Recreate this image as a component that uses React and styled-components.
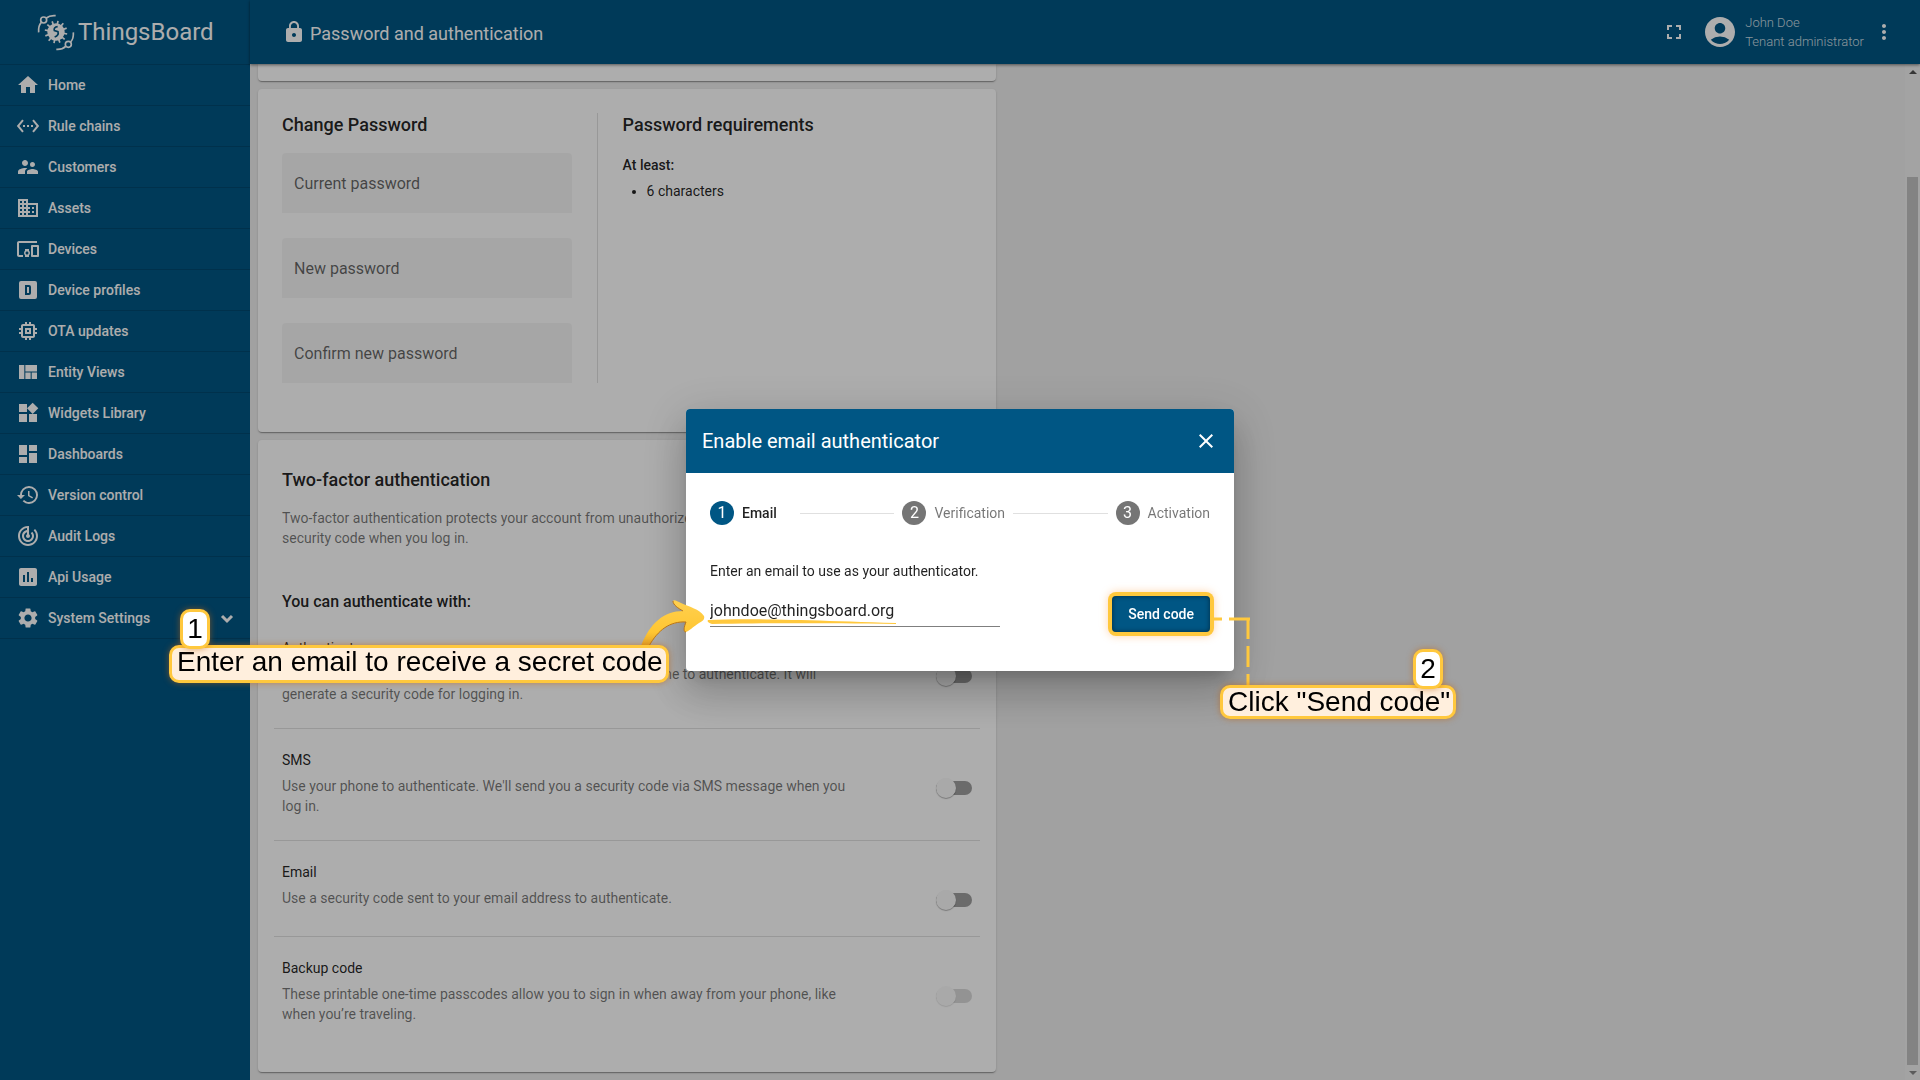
import React from "react";
import styled, { createGlobalStyle, ThemeProvider } from "styled-components";
import {
  MdHome,
  MdSettingsEthernet,
  MdSupervisorAccount,
  MdDomain,
  MdDevicesOther,
  MdMemory,
  MdViewQuilt,
  MdWidgets,
  MdDashboard,
  MdHistory,
  MdTrackChanges,
  MdInsertChart,
  MdSettings,
  MdLock,
  MdFullscreen,
  MdAccountCircle,
  MdMoreVert,
  MdClose
} from "react-icons/md";

const theme = {
  primaryColor: "#005684",
  pageColor: "#eeeeee",
  accentColor: "#ffc83d",
  noteColor: "#ffefdd",
  textColor: "rgba(0, 0, 0, 0.87)",
  mutedColor: "rgba(0, 0, 0, 0.54)",
  lineColor: "rgba(0, 0, 0, 0.12)"
};

const GlobalStyle = createGlobalStyle`
  * {
    box-sizing: border-box;
  }
  body {
    margin: 0;
    font-family: Roboto, "Liberation Sans", sans-serif;
    font-size: 14px;
    line-height: 20px;
    color: ${theme.textColor};
  }
  h1, h2, h3, h4, p, ul {
    margin: 0;
    padding: 0;
  }
  button, input {
    font-family: inherit;
  }
`;

const Page = styled.div`
  display: flex;
  height: 100vh;
  overflow: hidden;
  background: ${props => props.theme.pageColor};
`;

/* side bar */

const SideBar = styled.nav`
  flex: 0 0 250px;
  display: flex;
  flex-direction: column;
  background: ${props => props.theme.primaryColor};
`;

const Brand = styled.a`
  display: flex;
  align-items: center;
  gap: 2px;
  height: 64px;
  padding-left: 36px;
  font-size: 24px;
  line-height: 32px;
  color: #fff;
  text-decoration: none;
`;

const BrandMark = styled.svg`
  width: 40px;
  height: 40px;
`;

const Menu = styled.ul`
  list-style: none;
  border-top: 1px solid rgba(0, 0, 0, 0.15);
`;

const MenuItem = styled.li`border-bottom: 1px solid rgba(0, 0, 0, 0.15);`;

const MenuLink = styled.a`
  display: flex;
  align-items: center;
  gap: 8px;
  height: 40px;
  padding: 0 11px 0 16px;
  font-weight: 500;
  color: #fff;
  text-decoration: none;
  svg {
    flex: none;
    width: 24px;
    height: 24px;
  }
`;

const MenuText = styled.span`flex: 1;`;

/* top bar */

const Column = styled.div`
  flex: 1;
  min-width: 0;
  display: flex;
  flex-direction: column;
`;

const TopBar = styled.header`
  position: relative;
  flex: none;
  display: flex;
  align-items: center;
  height: 64px;
  padding: 0 24px 0 32px;
  color: #fff;
  background: ${props => props.theme.primaryColor};
  box-shadow: 0 1px 3px rgba(0, 0, 0, 0.5);
`;

const PageTitle = styled.h1`
  flex: 1;
  display: flex;
  align-items: center;
  gap: 4px;
  font-size: 18px;
  line-height: 24px;
  font-weight: 400;
  svg {
    width: 24px;
    height: 24px;
  }
  span {
    padding-top: 3px;
  }
`;

const IconButton = styled.button`
  display: flex;
  padding: 0;
  border: 0;
  color: inherit;
  background: none;
  svg {
    width: 24px;
    height: 24px;
  }
`;

const User = styled.div`
  display: flex;
  align-items: center;
  gap: 7px;
  margin: 0 8px 0 16px;
  > svg {
    width: 36px;
    height: 36px;
  }
`;

const UserText = styled.div`
  font-size: 13px;
  line-height: 19px;
  font-weight: 300;
  color: rgba(255, 255, 255, 0.8);
`;

/* content */

const Body = styled.div`
  flex: 1;
  min-height: 0;
  display: flex;
`;

const Content = styled.main`
  flex: 1;
  display: flex;
  flex-direction: column;
  gap: 8px;
  padding: 0 8px;
`;

const Card = styled.section`
  flex: none;
  width: 45%;
  border-radius: 4px;
  background: #fff;
  box-shadow: 0 2px 1px -1px rgba(0, 0, 0, 0.2), 0 1px 1px rgba(0, 0, 0, 0.14),
    0 1px 3px rgba(0, 0, 0, 0.12);
`;

const CardEnd = styled(Card)`
  height: 17px;
  border-radius: 0 0 4px 4px;
`;

const PasswordCard = styled(Card)`
  display: grid;
  grid-template-columns: 42% 1fr;
  column-gap: 25px;
  padding: 24px 24px 49px;
`;

const CardTitle = styled.h2`
  font-size: 18px;
  line-height: 24px;
  font-weight: 500;
`;

const Fields = styled.form`
  display: flex;
  flex-direction: column;
  gap: 25px;
  margin-top: 16px;
`;

const Field = styled.input`
  width: 100%;
  height: 60px;
  padding: 0 12px;
  border: 0;
  border-radius: 4px 4px 0 0;
  font-size: 16px;
  background: rgba(0, 0, 0, 0.04);
  &::placeholder {
    color: rgba(0, 0, 0, 0.6);
    opacity: 1;
  }
`;

const Requirements = styled.div`
  padding-left: 25px;
  border-left: 1px solid ${props => props.theme.lineColor};
`;

const RequirementsLead = styled.h3`
  margin-top: 18px;
  font-size: 14px;
  line-height: 20px;
  font-weight: 500;
`;

const RequirementsList = styled.ul`
  margin-top: 6px;
  padding-left: 24px;
`;

const FactorCard = styled(Card)`padding: 28px 16px 24px;`;

const Intro = styled.div`padding: 0 8px;`;

const Muted = styled.p`color: ${props => props.theme.mutedColor};`;

const IntroText = styled(Muted)`margin-top: 16px;`;

const Subtitle = styled.h3`
  margin: 44px 0 5px;
  font-size: 16px;
  line-height: 20px;
  font-weight: 500;
`;

const Provider = styled.div`
  display: flex;
  justify-content: space-between;
  min-height: 95px;
  padding: 21px 8px 24px;
  & + & {
    border-top: 1px solid ${props => props.theme.lineColor};
    min-height: 96px;
  }
`;

const ProviderText = styled.label`
  flex: 0 1 570px;
`;

const ProviderName = styled.h4`
  margin-bottom: 6px;
  font-size: 14px;
  line-height: 20px;
  font-weight: 400;
`;

const Switch = styled.input`
  appearance: none;
  flex: none;
  display: flex;
  align-items: center;
  width: 36px;
  height: 14px;
  margin: 31px 0 0;
  border-radius: 7px;
  background: ${props => (props.disabled ? "rgba(0, 0, 0, 0.15)" : "rgba(0, 0, 0, 0.38)")};
  &::before {
    content: "";
    width: 20px;
    height: 20px;
    border-radius: 50%;
    background: #fafafa;
    box-shadow: 0 1px 1px rgba(0, 0, 0, ${props => (props.disabled ? 0.12 : 0.3)});
  }
`;

/* scroll bar */

const ScrollBar = styled.div`
  flex: 0 0 15px;
  display: flex;
  flex-direction: column;
  align-items: center;
  padding: 6px 0 5px;
  background: #f1f1f1;
`;

const ScrollArrow = styled.span`
  border: solid transparent;
  border-width: ${props => (props.$down ? "4px 4px 0" : "0 4px 4px")};
  border-color: ${props => (props.$down ? "#888 transparent" : "transparent transparent #505050")};
`;

const ScrollThumb = styled.span`
  flex: 1;
  width: 11px;
  margin: 103px 0 6px;
  background: #c1c1c1;
`;

/* dialog */

const Overlay = styled.div`
  position: fixed;
  inset: 0;
  display: flex;
  align-items: center;
  justify-content: center;
  background: rgba(0, 0, 0, 0.32);
`;

const Dialog = styled.div`
  position: relative;
  width: 548px;
  border-radius: 4px;
  background: #fff;
  box-shadow: 0 11px 15px -7px rgba(0, 0, 0, 0.2), 0 24px 38px 3px rgba(0, 0, 0, 0.14),
    0 9px 46px 8px rgba(0, 0, 0, 0.12);
`;

const DialogHeader = styled.header`
  display: flex;
  align-items: center;
  justify-content: space-between;
  height: 64px;
  padding: 0 16px;
  border-radius: 4px 4px 0 0;
  color: #fff;
  background: ${props => props.theme.primaryColor};
`;

const DialogTitle = styled.h2`
  font-size: 20px;
  line-height: 32px;
  font-weight: 400;
`;

const DialogBody = styled.div`padding: 28px 24px 39px;`;

const Steps = styled.div`
  display: flex;
  align-items: center;
  gap: 8px;
`;

const StepLine = styled.span`
  flex: 1;
  height: 1px;
  background: ${props => props.theme.lineColor};
`;

const StepNumber = styled.span`
  flex: none;
  width: 24px;
  height: 24px;
  border-radius: 50%;
  font-size: 16px;
  line-height: 24px;
  text-align: center;
  color: #fff;
  background: ${props => (props.$active ? props.theme.primaryColor : "#757575")};
`;

const StepLabel = styled.span`
  min-width: 50px;
  font-weight: ${props => (props.$active ? 500 : 400)};
  color: ${props => (props.$active ? props.theme.textColor : props.theme.mutedColor)};
`;

const EmailLabel = styled.label`
  display: block;
  margin-top: 36px;
`;

const EmailRow = styled.form`
  display: flex;
  align-items: flex-start;
  justify-content: space-between;
  margin-top: 15px;
`;

const EmailInput = styled.input`
  width: 290px;
  height: 31px;
  padding: 0 0 2px;
  border: 0;
  border-bottom: 1px solid rgba(0, 0, 0, 0.5);
  font-size: 16px;
  color: ${props => props.theme.textColor};
  outline: none;
`;

const SendButton = styled.button`
  height: 36px;
  padding: 0 16px;
  border: 0;
  border-radius: 4px;
  font-size: 14px;
  font-weight: 500;
  color: #fff;
  background: ${props => props.theme.primaryColor};
  box-shadow: 0 0 0 4px ${props => props.theme.accentColor}, 0 0 8px 4px rgba(255, 150, 50, 0.4),
    inset 0 0 5px rgba(0, 0, 0, 0.5);
`;

/* notes lying over the dialog */

const Drawing = styled.svg`
  position: absolute;
  top: 0;
  left: 0;
  overflow: visible;
  pointer-events: none;
`;

const Note = styled.div`
  position: absolute;
  top: ${props => props.$top}px;
  left: ${props => props.$left}px;
  padding: 0 3px ${props => (props.$tall ? 4 : 0)}px 5px;
  border: 3px solid ${props => props.theme.accentColor};
  border-radius: 10px;
  font-family: "Liberation Sans", Arial, sans-serif;
  font-size: 28px;
  line-height: 28px;
  white-space: nowrap;
  color: #000;
  background: ${props => props.theme.noteColor};
  box-shadow: 0 0 6px rgba(190, 100, 20, 0.6);
`;

const Badge = styled(Note)`
  width: 30px;
  padding: 3px 0;
  text-align: center;
  background: #fff;
`;

const DeviceProfileIcon = () =>
  <svg viewBox="0 0 24 24" fill="currentColor">
    <path d="M9 7h4a2 2 0 0 1 2 2v6a2 2 0 0 1-2 2H9V7m2 2v6h2V9h-2M5 3h14a2 2 0 0 1 2 2v14a2 2 0 0 1-2 2H5a2 2 0 0 1-2-2V5a2 2 0 0 1 2-2z" fillRule="evenodd" />
  </svg>;

const Chevron = () =>
  <svg viewBox="0 0 24 24" fill="none" stroke="currentColor" strokeWidth="3">
    <path d="M7 10l5 5 5-5" />
  </svg>;

const TEETH = [0, 30, 60, 90, 120, 150, 180, 210, 240, 270, 300, 330];

const Logo = () =>
  <BrandMark viewBox="18 10 120 120" fill="none" stroke="#fff" strokeWidth="5">
    <circle cx="41" cy="34" r="9" />
    <path d="M49 28C56 22 65 20 77 21M34 41C27 48 25 58 26 71" />
    <circle cx="115" cy="107" r="9" />
    <path d="M107 113C100 120 92 123 79 122M122 100C129 92 131 84 130 71" />
    <circle cx="78" cy="70" r="26" fill="#fff" stroke="none" />
    {TEETH.map(angle =>
      <path key={angle} d="M78 50V36" transform={`rotate(${angle + 10} 78 70)`} />
    )}
    <path
      d="M83 54C74 55 71 60 73 66L84 69C86 76 82 82 74 85"
      stroke="#005684"
      strokeWidth="5"
    />
  </BrandMark>;

const menu = [
  { name: "Home", icon: MdHome },
  { name: "Rule chains", icon: MdSettingsEthernet },
  { name: "Customers", icon: MdSupervisorAccount },
  { name: "Assets", icon: MdDomain },
  { name: "Devices", icon: MdDevicesOther },
  { name: "Device profiles", icon: DeviceProfileIcon },
  { name: "OTA updates", icon: MdMemory },
  { name: "Entity Views", icon: MdViewQuilt },
  { name: "Widgets Library", icon: MdWidgets },
  { name: "Dashboards", icon: MdDashboard },
  { name: "Version control", icon: MdHistory },
  { name: "Audit Logs", icon: MdTrackChanges },
  { name: "Api Usage", icon: MdInsertChart },
  { name: "System Settings", icon: MdSettings, expandable: true }
];

const passwords = ["Current password", "New password", "Confirm new password"];

const providers = [
  {
    id: "totp",
    name: "Authenticator app",
    text:
      "Use apps like Google Authenticator, Authy, or Duo on your phone to authenticate. It will generate a security code for logging in."
  },
  {
    id: "sms",
    name: "SMS",
    text:
      "Use your phone to authenticate. We'll send you a security code via SMS message when you log in."
  },
  {
    id: "email",
    name: "Email",
    text: "Use a security code sent to your email address to authenticate."
  },
  {
    id: "backup",
    name: "Backup code",
    text:
      "These printable one-time passcodes allow you to sign in when away from your phone, like when you’re traveling.",
    disabled: true
  }
];

const steps = ["Email", "Verification", "Activation"];

const Navigation = () =>
  <SideBar>
    <Brand href="#home">
      <Logo />
      ThingsBoard
    </Brand>
    <Menu>
      {menu.map(({ name, icon: Icon, expandable }) =>
        <MenuItem key={name}>
          <MenuLink href="#menu">
            <Icon />
            <MenuText>
              {name}
            </MenuText>
            {expandable && <Chevron />}
          </MenuLink>
        </MenuItem>
      )}
    </Menu>
  </SideBar>;

const Toolbar = () =>
  <TopBar>
    <PageTitle>
      <MdLock />
      <span>Password and authentication</span>
    </PageTitle>
    <IconButton aria-label="Fullscreen">
      <MdFullscreen />
    </IconButton>
    <User>
      <MdAccountCircle />
      <UserText>
        <div>John Doe</div>
        <div>Tenant administrator</div>
      </UserText>
    </User>
    <IconButton aria-label="More">
      <MdMoreVert />
    </IconButton>
  </TopBar>;

const ChangePassword = () =>
  <PasswordCard>
    <div>
      <CardTitle>Change Password</CardTitle>
      <Fields>
        {passwords.map(name =>
          <Field key={name} type="password" placeholder={name} aria-label={name} />
        )}
      </Fields>
    </div>
    <Requirements>
      <CardTitle>Password requirements</CardTitle>
      <RequirementsLead>At least:</RequirementsLead>
      <RequirementsList>
        <li>6 characters</li>
      </RequirementsList>
    </Requirements>
  </PasswordCard>;

const TwoFactor = () =>
  <FactorCard>
    <Intro>
      <CardTitle>Two-factor authentication</CardTitle>
      <IntroText>
        Two-factor authentication protects your account from unauthorized access. All you have to do is enter a
        security code when you log in.
      </IntroText>
      <Subtitle>You can authenticate with:</Subtitle>
    </Intro>
    {providers.map(({ id, name, text, disabled }) =>
      <Provider key={id}>
        <ProviderText htmlFor={id}>
          <ProviderName>
            {name}
          </ProviderName>
          <Muted>
            {text}
          </Muted>
        </ProviderText>
        <Switch type="checkbox" role="switch" id={id} disabled={disabled} />
      </Provider>
    )}
  </FactorCard>;

const Notes = () =>
  <React.Fragment>
    <Drawing width="548" height="262" aria-hidden="true">
      <defs>
        <linearGradient id="arrow" x1="0" y1="0" x2="0" y2="1">
          <stop offset="0" stopColor="#ffd04f" />
          <stop offset="0.7" stopColor="#ffc632" />
          <stop offset="1" stopColor="#e0a02a" />
        </linearGradient>
      </defs>
      <path
        d="M-45 237C-36 214 -22 202 -3 202C-8 199 -13 196 -13 192C-12 190 -9 192 -5 194C4 198 13 200 18 207C19 210 17 212 13 214C7 218 3 222 0 223C-3 223 -2 218 0 213C-16 212 -28 221 -37 237Z"
        fill="url(#arrow)"
      />
      <path
        d="M-13 192C-13 196 -8 199 -3 202M0 213C-2 218 -3 223 0 223M0 213C-16 212 -28 221 -37 237"
        fill="none"
        stroke="#b87418"
        strokeWidth="1"
      />
      <path d="M22 211C60 209 120 211 210 214L210 215C130 214 80 214 26 215C22 214 21 212 22 211Z" fill="#ffc83d" />
      <g stroke="#ffc83d" strokeWidth="3" strokeDasharray="21 7" fill="none">
        <path d="M564 210H528" />
        <path d="M562 209V277" />
      </g>
    </Drawing>
    <Note $left={-517} $top={236} $tall>Enter an email to receive a secret code</Note>
    <Badge $left={-506} $top={200}>1</Badge>
    <Note $left={534} $top={276}>Click "Send code"</Note>
    <Badge $left={727} $top={240}>2</Badge>
  </React.Fragment>;

const EmailDialog = () =>
  <Overlay>
    <Dialog role="dialog" aria-labelledby="dialog-title">
      <DialogHeader>
        <DialogTitle id="dialog-title">Enable email authenticator</DialogTitle>
        <IconButton aria-label="Close">
          <MdClose />
        </IconButton>
      </DialogHeader>
      <DialogBody>
        <Steps>
          {steps.map((name, idx) =>
            <React.Fragment key={name}>
              {idx > 0 && <StepLine />}
              <StepNumber $active={idx === 0}>
                {idx + 1}
              </StepNumber>
              <StepLabel $active={idx === 0}>
                {name}
              </StepLabel>
            </React.Fragment>
          )}
        </Steps>
        <EmailLabel htmlFor="auth-email">Enter an email to use as your authenticator.</EmailLabel>
        <EmailRow>
          <EmailInput id="auth-email" type="email" defaultValue="johndoe@thingsboard.org" />
          <SendButton type="button">Send code</SendButton>
        </EmailRow>
      </DialogBody>
      <Notes />
    </Dialog>
  </Overlay>;

const App = () =>
  <ThemeProvider theme={theme}>
    <GlobalStyle />
    <Page>
      <Navigation />
      <Column>
        <Toolbar />
        <Body>
          <Content>
            <CardEnd />
            <ChangePassword />
            <TwoFactor />
          </Content>
          <ScrollBar aria-hidden="true">
            <ScrollArrow />
            <ScrollThumb />
            <ScrollArrow $down />
          </ScrollBar>
        </Body>
      </Column>
    </Page>
    <EmailDialog />
  </ThemeProvider>;

export default App;
